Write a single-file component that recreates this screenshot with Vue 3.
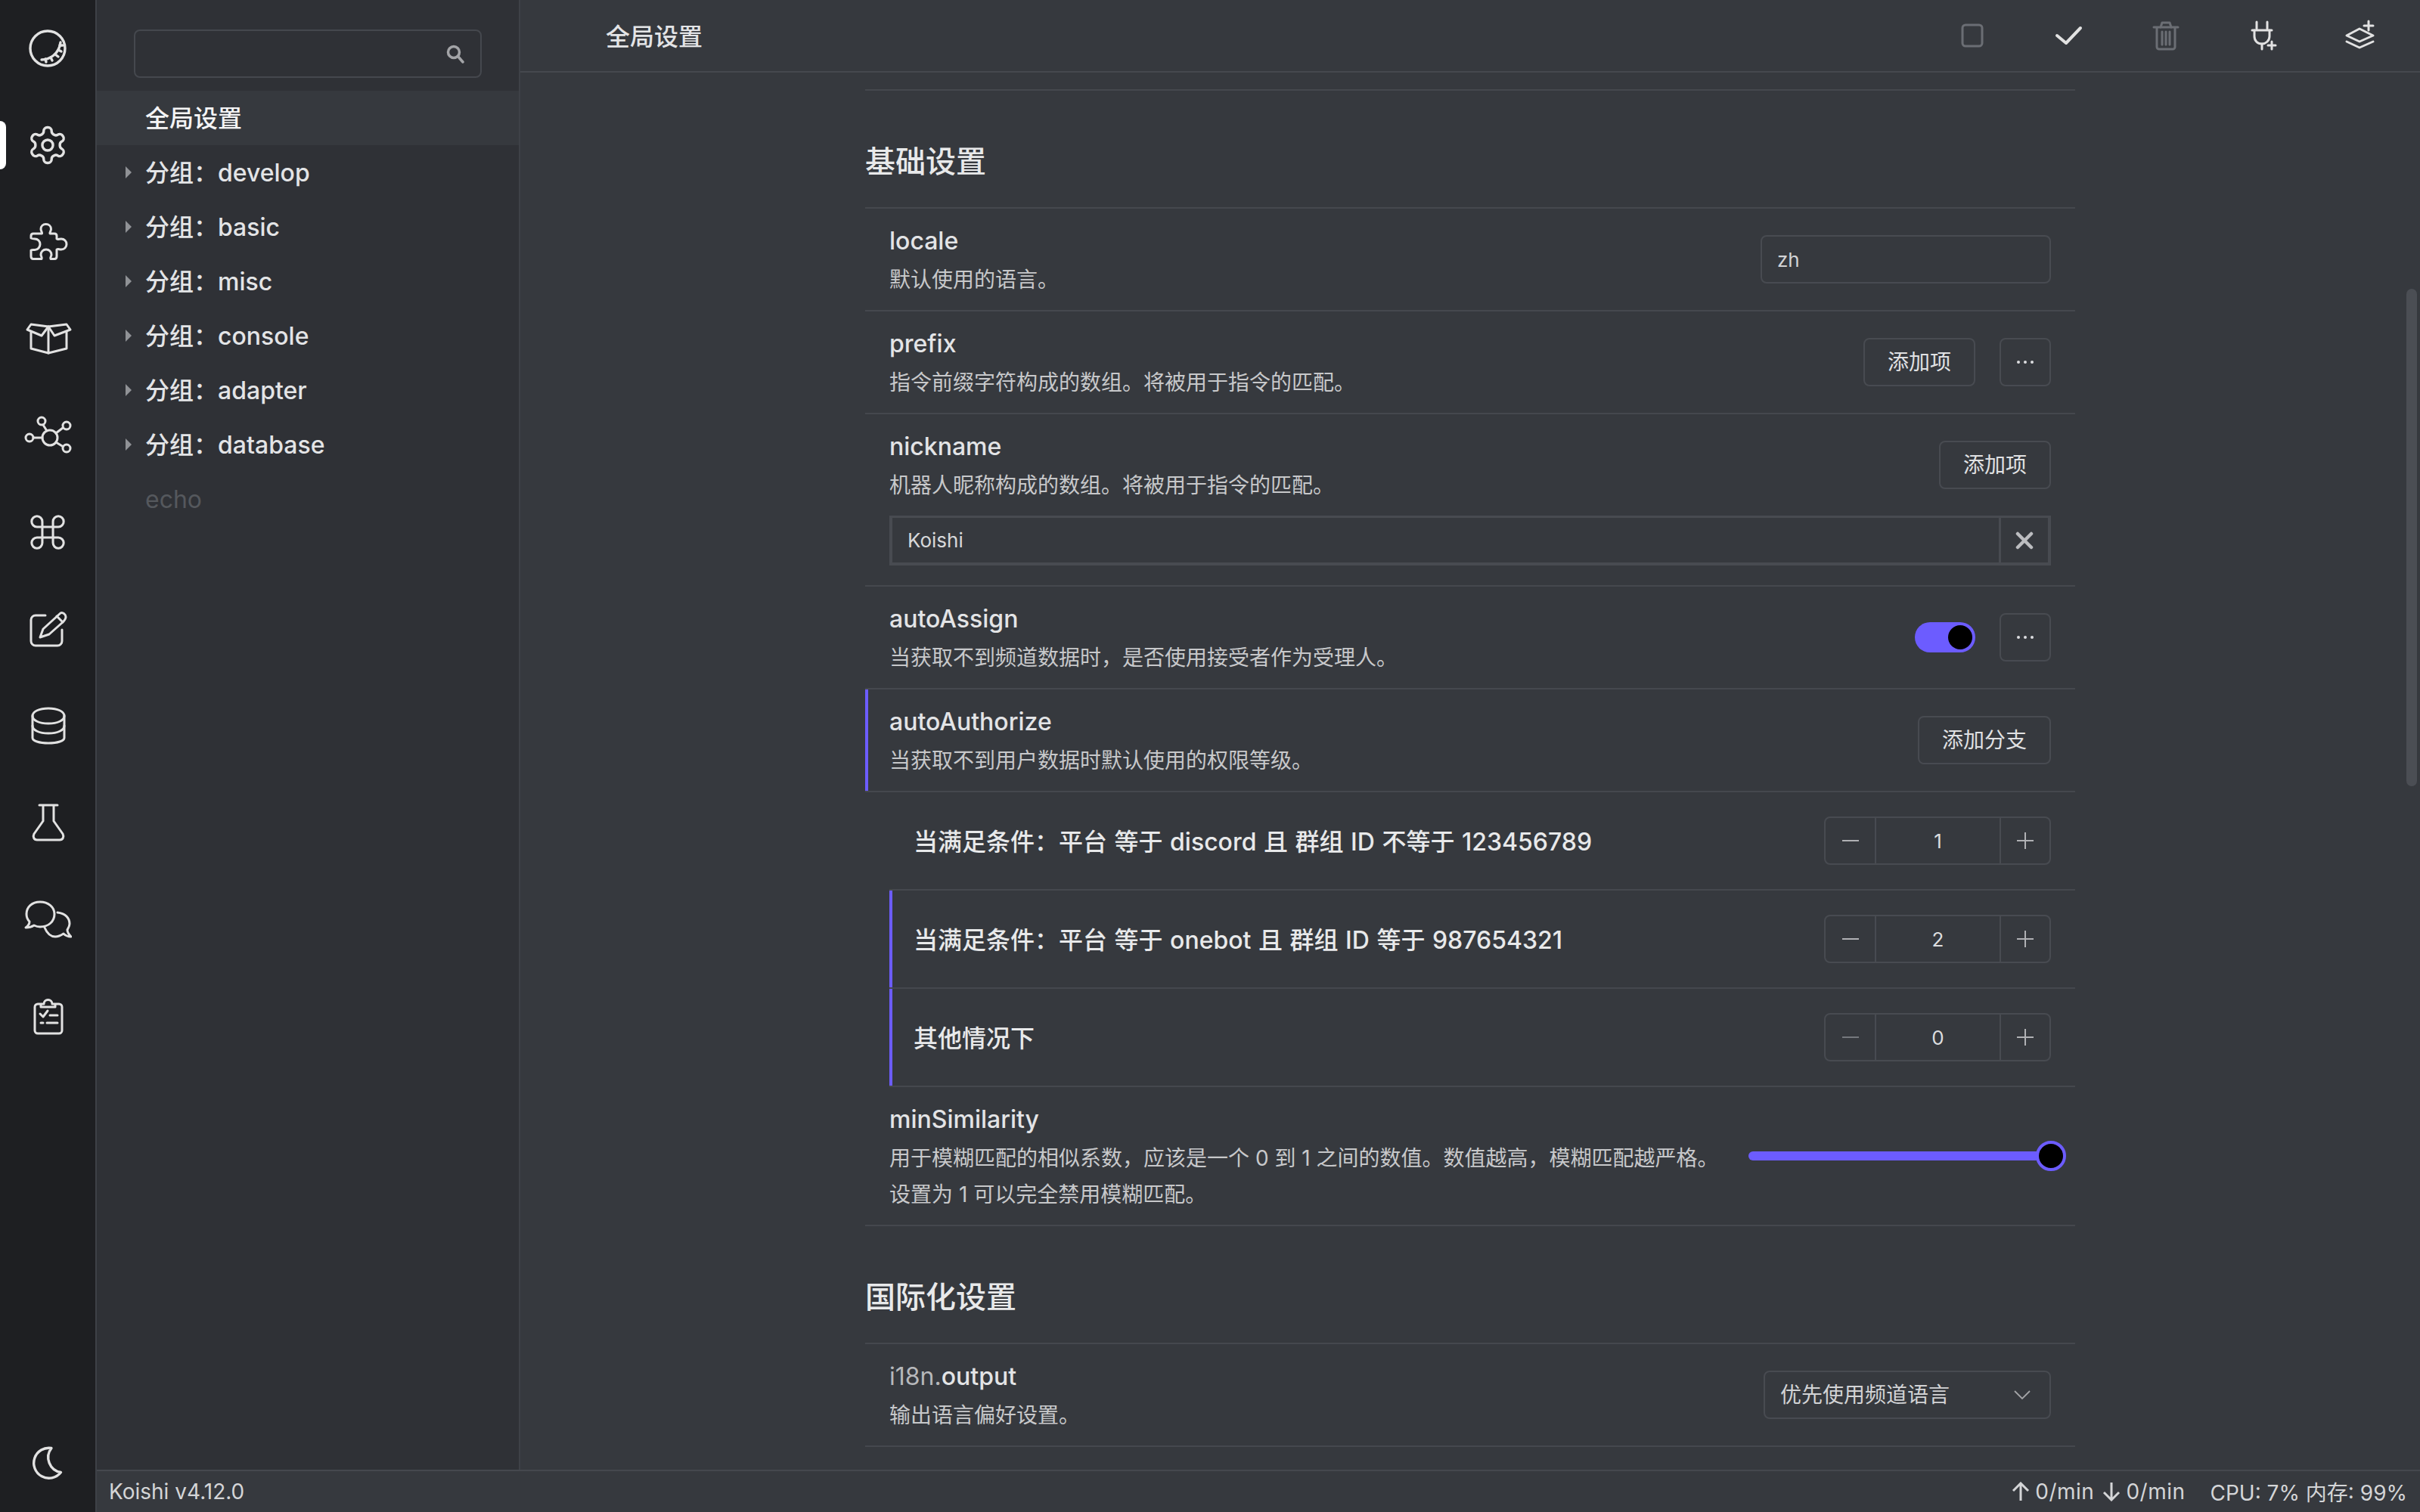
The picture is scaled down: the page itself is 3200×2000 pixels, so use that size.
<script setup>
const activity = [
  { paths: ['M32 9a23 23 0 1 0 0 46a23 23 0 1 0 0-46Z', 'M24 47C34 47 47 40 49 24', 'M29 46L30 50M36 44L38 48M42 40L46 43M46 34L50 36M48 28L52 28'] },
  { vb: '-1.6 -1.6 27.2 27.2', sw: 1.45, active: true, paths: ['M12.22 2h-.44a2 2 0 0 0-2 2v.18a2 2 0 0 1-1 1.73l-.43.25a2 2 0 0 1-2 0l-.15-.08a2 2 0 0 0-2.73.73l-.22.38a2 2 0 0 0 .73 2.73l.15.1a2 2 0 0 1 1 1.72v.51a2 2 0 0 1-1 1.74l-.15.09a2 2 0 0 0-.73 2.73l.22.38a2 2 0 0 0 2.73.73l.15-.08a2 2 0 0 1 2 0l.43.25a2 2 0 0 1 1 1.73V20a2 2 0 0 0 2 2h.44a2 2 0 0 0 2-2v-.18a2 2 0 0 1 1-1.73l.43-.25a2 2 0 0 1 2 0l.15.08a2 2 0 0 0 2.73-.73l.22-.39a2 2 0 0 0-.73-2.73l-.15-.08a2 2 0 0 1-1-1.74v-.5a2 2 0 0 1 1-1.74l.15-.09a2 2 0 0 0 .73-2.73l-.22-.38a2 2 0 0 0-2.73-.73l-.15.08a2 2 0 0 1-2 0l-.43-.25a2 2 0 0 1-1-1.73V4a2 2 0 0 0-2-2z', 'M12 9a3 3 0 1 0 0 6a3 3 0 1 0 0-6Z'] },
  { sw: 3, paths: ['M13 21H24.500C25 19 23 17.500 23 15C23 11 26 8.500 29.700 8.500C33.400 8.500 36.500 11 36.500 15C36.500 17.500 34.500 19 35 21H41C43 21 44 22 44 24V28C46 29 47 28 50 28C54 28 57 31 57 35C57 39 54 42 50 42C47 42 46 41 44 42V51C44 53 43 54.500 41 54.500H36C35 52 37 51 37 49C37 45 34 42 30 42C26 42 23 45 23 49C23 51 25 52 24 54.500H13C11 54.500 10 53 10 51V43C12 42 13 42.500 15 42.500C19 42.500 22 39 22 35C22 31 19 28 15 28C13 28 12 28 10 27V24C10 22 11 21 13 21Z'] },
  { sw: 3, paths: ['M10 23V45L33 51L57 45V23', 'M33 16V51', 'M33 16L24 28L5 20L10 13Z', 'M33 16L41 28L62 20L57 13Z'] },
  { sw: 3, paths: ['M35 25a10 10 0 1 0 0 20a10 10 0 1 0 0-20Z', 'M24 8a5 5 0 1 0 0 10a5 5 0 1 0 0-10Z', 'M57 14a5 5 0 1 0 0 10a5 5 0 1 0 0-10Z', 'M57 44a5 5 0 1 0 0 10a5 5 0 1 0 0-10Z', 'M8 30a5 5 0 1 0 0 10a5 5 0 1 0 0-10Z', 'M13 35H25', 'M26 18L31 26', 'M52 22L43 29', 'M52 46.500L43 41'] },
  { vb: '-1.6 -1.6 27.2 27.2', sw: 1.3, paths: ['M15 6v12a3 3 0 1 0 3-3H6a3 3 0 1 0 3 3V6a3 3 0 1 0-3 3h12a3 3 0 1 0-3-3'] },
  { sw: 3, paths: ['M29 14H16a6 6 0 0 0-6 6V48a6 6 0 0 0 6 6H45a6 6 0 0 0 6-6V33', 'M22 43L26 32L49 11C52 9 56 13 56 16C56 18 54 21 52 23L34 39Z', 'M44 15L52 23'] },
  { sw: 3, paths: ['M33 9C21 9 12 13 12 19C12 25 21 29 33 29C45 29 54 25 54 19C54 13 45 9 33 9Z', 'M12 19V48C12 52 21 55 33 55C45 55 54 52 54 48V19', 'M12 32C12 38 21 42 33 42C45 42 54 38 54 32'] },
  { sw: 3, paths: ['M21 9H45', 'M26 10V30L14 47C12 51 14 55 18 55H48C52 55 54 51 52 47L40 30V10'] },
  { sw: 3, paths: ['M22 9C11 9 4 16 4 25C4 29 6 33 8 35C8 38 6 41 3 43C7 43 11 42 14 40C16 41 19 42 22 42C33 42 41 35 41 25C41 16 33 9 22 9Z', 'M45 23C55 24 61 30 61 38C61 41 59 44 58 46C58 49 60 52 63 55C59 55 55 53 53 51C50 53 46 55 42 55C36 55 31 50 28 43'] },
  { sw: 3, paths: ['M22 16H19a4 4 0 0 0-4 4V51a4 4 0 0 0 4 4H47a4 4 0 0 0 4-4V20a4 4 0 0 0-4-4H43', 'M23 20V16H27a5.500 5.500 0 0 1 11 0H42V20Z', 'M22 29L26 33L32 25', 'M35 31H45', 'M23 41H26', 'M31 41H45'] }
]
const moon = { paths: ['M37 11.500A20 20 0 1 0 49.500 43.500A20 20 0 0 1 37 11.500Z'] }

const headerActions = [
  { dim: true, sw: 3, paths: ['M23 18H41a4 4 0 0 1 4 4V42a4 4 0 0 1-4 4H23a4 4 0 0 1-4-4V22a4 4 0 0 1 4-4Z'] },
  { sw: 4, paths: ['M16 32L28 42L47 22'] },
  { dim: true, sw: 3, paths: ['M16 21H48', 'M25 21L27 15H37L39 21', 'M20 22V47a3 3 0 0 0 3 3H41a3 3 0 0 0 3-3V22', 'M27 27V44M32 27V44M37 27V44'] },
  { sw: 3, paths: ['M24 14V23M38 14V23', 'M18 25H44', 'M21 25V33C21 39 25 43 31 43C36 43 41 39 41 33V25', 'M31 43V50', 'M44 40V50M39 45H49'] },
  { sw: 3, paths: ['M15 32L32 23L50 32L32 40Z', 'M15 40L32 48L50 40', 'M44 13V25M38 19H50'] }
]

const groups = ['develop', 'basic', 'misc', 'console', 'adapter', 'database']

const branches = [
  { label: '当满足条件\uFF1A平台 等于 discord 且 群组 ID 不等于 123456789', value: 1 },
  { label: '当满足条件\uFF1A平台 等于 onebot 且 群组 ID 等于 987654321', value: 2, accent: true },
  { label: '其他情况下', value: 0, accent: true, min: true }
]

const groupPrefix = '分组\uFF1A'
const assignDesc = '当获取不到频道数据时\uFF0C是否使用接受者作为受理人。'
const similarityDesc = '用于模糊匹配的相似系数\uFF0C应该是一个 0 到 1 之间的数值。数值越高\uFF0C模糊匹配越严格。设置为 1 可以完全禁用模糊匹配。'
</script>

<template>
  <div class="shell">
    <nav class="activity">
      <div v-for="(icon, i) in activity" :key="i" class="activity-item">
        <span v-if="icon.active" class="indicator"></span>
        <svg class="icon" width="64" height="64" :viewBox="icon.vb || '0 0 64 64'" :stroke-width="icon.sw || 3.4">
          <path v-for="(d, j) in icon.paths" :key="j" :d="d" />
        </svg>
      </div>
      <div class="activity-item bottom">
        <svg class="icon" width="64" height="64" viewBox="0 0 64 64" stroke-width="3.4">
          <path v-for="(d, j) in moon.paths" :key="j" :d="d" />
        </svg>
      </div>
    </nav>

    <div class="workspace">
      <div class="panels">
        <aside class="sidebar">
          <div class="search-wrap">
            <div class="search">
              <svg width="26" height="26" viewBox="0 0 26 26" class="search-icon">
                <circle cx="11" cy="11" r="7.500" />
                <path d="M16.500 16.500L23 24" />
              </svg>
            </div>
          </div>
          <div class="tree-item active">全局设置</div>
          <div v-for="g in groups" :key="g" class="tree-item">
            <span class="caret"></span>{{ groupPrefix }}{{ g }}
          </div>
          <div class="tree-item dim">echo</div>
        </aside>

        <main class="main">
          <header class="topbar">
            <div class="topbar-title">全局设置</div>
            <div class="actions">
              <div v-for="(a, i) in headerActions" :key="i" class="action" :class="{ dim: a.dim }">
                <svg class="icon" width="64" height="64" viewBox="0 0 64 64" :stroke-width="a.sw">
                  <path v-for="(d, j) in a.paths" :key="j" :d="d" />
                </svg>
              </div>
            </div>
          </header>

          <div class="content">
            <div class="column">
              <div class="top-rule"></div>
              <h2 class="section-title">基础设置</h2>
              <div class="list">
                <div class="row">
                  <div class="info">
                    <div class="name">locale</div>
                    <div class="desc">默认使用的语言。</div>
                  </div>
                  <div class="text-input locale">zh</div>
                </div>

                <div class="row">
                  <div class="info">
                    <div class="name">prefix</div>
                    <div class="desc">指令前缀字符构成的数组。将被用于指令的匹配。</div>
                  </div>
                  <div class="controls">
                    <button class="btn">添加项</button>
                    <button class="btn more"><span class="dots"><i></i><i></i><i></i></span></button>
                  </div>
                </div>

                <div class="row stacked">
                  <div class="row-head">
                    <div class="info">
                      <div class="name">nickname</div>
                      <div class="desc">机器人昵称构成的数组。将被用于指令的匹配。</div>
                    </div>
                    <button class="btn">添加项</button>
                  </div>
                  <div class="input-group">
                    <div class="group-value">Koishi</div>
                    <div class="group-remove">
                      <svg width="24" height="24" viewBox="0 0 24 24">
                        <path d="M3 3L21 21M21 3L3 21" />
                      </svg>
                    </div>
                  </div>
                </div>

                <div class="row">
                  <div class="info">
                    <div class="name">autoAssign</div>
                    <div class="desc">{{ assignDesc }}</div>
                  </div>
                  <div class="controls">
                    <div class="switch"><span class="switch-knob"></span></div>
                    <button class="btn more"><span class="dots"><i></i><i></i><i></i></span></button>
                  </div>
                </div>

                <div class="row accent">
                  <div class="info">
                    <div class="name">autoAuthorize</div>
                    <div class="desc">当获取不到用户数据时默认使用的权限等级。</div>
                  </div>
                  <button class="btn">添加分支</button>
                </div>

                <div class="branches">
                  <div v-for="b in branches" :key="b.value" class="branch" :class="{ accent: b.accent }">
                    <div class="branch-label">{{ b.label }}</div>
                    <div class="number">
                      <span class="step left" :class="{ faint: b.min }">
                        <svg width="24" height="24" viewBox="0 0 24 24"><path d="M1 12H23" /></svg>
                      </span>
                      <span class="number-value">{{ b.value }}</span>
                      <span class="step">
                        <svg width="24" height="24" viewBox="0 0 24 24"><path d="M1 12H23M12 1V23" /></svg>
                      </span>
                    </div>
                  </div>
                </div>

                <div class="row">
                  <div class="info wide">
                    <div class="name">minSimilarity</div>
                    <div class="desc">{{ similarityDesc }}</div>
                  </div>
                  <div class="slider"><span class="slider-knob"></span></div>
                </div>
              </div>

              <h2 class="section-title">国际化设置</h2>
              <div class="list">
                <div class="row">
                  <div class="info">
                    <div class="name"><span class="prefix">i18n.</span>output</div>
                    <div class="desc">输出语言偏好设置。</div>
                  </div>
                  <div class="select">
                    <span>优先使用频道语言</span>
                    <svg width="24" height="14" viewBox="0 0 24 14"><path d="M2 2L12 12L22 2" /></svg>
                  </div>
                </div>
              </div>
            </div>
            <div class="scrollbar"></div>
          </div>
        </main>
      </div>

      <footer class="status">
        <div>Koishi v4.12.0</div>
        <div class="status-right">
          <span class="stat">
            <svg width="24" height="26" viewBox="0 0 24 26"><path d="M12 25V2M2 12L12 2L22 12" /></svg><span class="rate">0/min</span>
          </span>
          <span class="stat">
            <svg width="24" height="26" viewBox="0 0 24 26"><path d="M12 1V24M2 14L12 24L22 14" /></svg><span class="rate">0/min</span>
          </span>
          <span class="stat system">CPU: 7% 内存: 99%</span>
        </div>
      </footer>
    </div>
  </div>
</template>

<style>
html, body { margin: 0; background: #36393e; }
</style>

<style scoped>
.shell {
  display: flex;
  width: 3200px;
  height: 2000px;
  overflow: hidden;
  background: #36393e;
  color: #e3e4e6;
  font-family: Inter, "Noto Sans CJK SC", sans-serif;
  font-size: 32px;
}
.icon { fill: none; stroke: #e2e2e2; stroke-linecap: round; stroke-linejoin: round; }

.activity {
  position: relative;
  display: flex;
  flex-direction: column;
  flex: none;
  width: 126px;
  background: #1e1f22;
  border-right: 2px solid #3e4147;
}
.activity-item {
  position: relative;
  display: flex;
  align-items: center;
  justify-content: center;
  height: 128px;
  flex: none;
}
.activity-item.bottom { margin-top: auto; }
.indicator {
  position: absolute;
  left: 0;
  top: 32px;
  width: 8px;
  height: 64px;
  background: #fff;
  border-radius: 0 8px 8px 0;
}

.workspace { display: flex; flex-direction: column; flex: 1; min-width: 0; }
.panels { display: flex; flex: 1; min-height: 0; }

.sidebar {
  flex: none;
  width: 558px;
  background: #2f3136;
  border-right: 2px solid #3e4147;
}
.search-wrap { padding: 39px 49px 17px; height: 120px; box-sizing: border-box; }
.search {
  display: flex;
  align-items: center;
  justify-content: flex-end;
  box-sizing: border-box;
  height: 64px;
  padding-right: 20px;
  border: 2px solid #45484e;
  border-radius: 8px;
}
.search-icon { fill: none; stroke: #a3a4a7; stroke-width: 3.500; stroke-linecap: round; }
.tree-item {
  position: relative;
  display: flex;
  align-items: center;
  box-sizing: border-box;
  height: 72px;
  padding: 0 0 5px 64px;
  font-weight: 500;
  color: #e3e4e6;
}
.tree-item.active { background: #36393e; color: #f4f4f5; }
.tree-item.dim { color: #55585d; font-weight: 400; padding-bottom: 0; }
.caret {
  position: absolute;
  left: 38px;
  top: 28px;
  width: 0;
  height: 0;
  border-left: 8px solid #909296;
  border-top: 8px solid transparent;
  border-bottom: 8px solid transparent;
}

.main { display: flex; flex-direction: column; flex: 1; min-width: 0; }
.topbar {
  display: flex;
  flex: none;
  align-items: center;
  justify-content: space-between;
  height: 94px;
  padding: 0 16px 0 113px;
  border-bottom: 2px solid #45484e;
}
.topbar-title { font-weight: 500; padding-bottom: 2px; }
.actions { display: flex; }
.action { display: flex; justify-content: center; width: 128px; }
.action.dim .icon { stroke: #6b6e74; }

.content { position: relative; flex: 1; min-height: 0; overflow: hidden; }
.column { width: 1600px; margin: 0 auto; }
.top-rule { height: 22px; border-bottom: 2px solid #45484e; }
.section-title {
  margin: 66px 0 32px;
  font-size: 40px;
  line-height: 56px;
  font-weight: 500;
  color: #e8e9ea;
}
.list { border-top: 2px solid #45484e; }
.row {
  display: flex;
  align-items: center;
  justify-content: space-between;
  padding: 16px 32px;
  border-bottom: 2px solid #45484e;
}
.row.accent { box-shadow: inset 4px 0 0 #6c5cff; }
.row.stacked { display: block; padding-bottom: 26px; }
.row-head { display: flex; align-items: center; justify-content: space-between; }
.info.wide { flex: 1; min-width: 0; margin-right: 32px; }
.name { font-size: 32px; line-height: 54px; font-weight: 500; color: #e3e4e6; }
.prefix { color: #b6b8bb; font-weight: 400; }
.desc { font-size: 28px; line-height: 48px; color: #c7c8ca; }

.controls { display: flex; align-items: center; gap: 32px; }
.text-input {
  box-sizing: border-box;
  display: flex;
  align-items: center;
  height: 64px;
  padding: 0 20px;
  border: 2px solid #484b51;
  border-radius: 8px;
  font-size: 26px;
  color: #d2d3d5;
}
.text-input.locale { width: 384px; }
.btn {
  box-sizing: border-box;
  height: 64px;
  padding: 0 30px;
  border: 2px solid #484b51;
  border-radius: 8px;
  background: transparent;
  font-family: inherit;
  font-size: 28px;
  line-height: 1;
  color: #e0e1e3;
}
.btn.more { width: 68px; padding: 0; }
.dots { display: flex; justify-content: center; gap: 5px; }
.dots i { width: 4px; height: 4px; background: #dcdde0; border-radius: 50%; }

.input-group {
  display: flex;
  box-sizing: border-box;
  height: 66px;
  margin-top: 16px;
  border: 4px solid #484b51;
  border-top-width: 3px;
}
.group-value {
  display: flex;
  align-items: center;
  flex: 1;
  padding-left: 20px;
  font-size: 26px;
  color: #d8d9db;
}
.group-remove {
  display: flex;
  align-items: center;
  justify-content: center;
  width: 62px;
  border-left: 3px solid #484b51;
}
.group-remove svg { fill: none; stroke: #bcbdc0; stroke-width: 4.500; stroke-linecap: round; }

.switch {
  display: flex;
  align-items: center;
  justify-content: flex-end;
  box-sizing: border-box;
  width: 80px;
  height: 40px;
  padding-right: 4px;
  background: #6c5cff;
  border-radius: 20px;
}
.switch-knob { width: 32px; height: 32px; background: #000; border-radius: 50%; }

.branches { margin-left: 32px; border-bottom: 2px solid #45484e; }
.branch {
  display: flex;
  align-items: center;
  justify-content: space-between;
  height: 128px;
  padding: 0 32px;
  border-bottom: 2px solid #45484e;
}
.branch:last-child { border-bottom: 0; }
.branch.accent { box-shadow: inset 4px 0 0 #6c5cff; }
.branch-label { font-weight: 500; color: #e8e9ea; padding-bottom: 3px; word-spacing: 1px; }
.number {
  display: flex;
  box-sizing: border-box;
  width: 300px;
  height: 64px;
  border: 2px solid #484b51;
  border-radius: 8px;
  font-size: 26px;
  color: #dcdddf;
}
.step {
  display: flex;
  align-items: center;
  justify-content: center;
  width: 64px;
  flex: none;
}
.step.left { width: 65px; }
.step svg { fill: none; stroke: #b0b1b4; stroke-width: 2; }
.step.faint svg { stroke: #75787d; }
.number-value {
  display: flex;
  align-items: center;
  justify-content: center;
  flex: 1;
  border-left: 2px solid #484b51;
  border-right: 2px solid #484b51;
}

.slider {
  position: relative;
  flex: none;
  width: 400px;
  height: 12px;
  background: #6c5cff;
  border-radius: 6px;
}
.slider-knob {
  position: absolute;
  right: -20px;
  top: -14px;
  box-sizing: border-box;
  width: 40px;
  height: 40px;
  background: #000;
  border: 4px solid #6c5cff;
  border-radius: 50%;
}

.select {
  display: flex;
  align-items: center;
  justify-content: space-between;
  box-sizing: border-box;
  width: 380px;
  height: 64px;
  padding: 0 24px 0 20px;
  border: 2px solid #484b51;
  border-radius: 8px;
  font-size: 28px;
  color: #d2d3d5;
}
.select span { padding-bottom: 4px; }
.select svg { fill: none; stroke: #a3a4a7; stroke-width: 1.800; }

.scrollbar {
  position: absolute;
  top: 286px;
  right: 4px;
  width: 14px;
  height: 658px;
  background: #4b4e54;
  border-radius: 7px;
}

.status {
  display: flex;
  flex: none;
  align-items: center;
  justify-content: space-between;
  height: 54px;
  padding: 0 17px 0 16px;
  border-top: 2px solid #45484e;
  font-size: 28px;
  color: #d4d5d7;
}
.status-right { display: flex; align-items: center; }
.stat { display: flex; align-items: center; gap: 7px; margin-left: 11px; }
.stat.system { margin-left: 33px; }
.rate { letter-spacing: 0.5px; }
.stat svg { fill: none; stroke: #d4d5d7; stroke-width: 3; }
</style>
